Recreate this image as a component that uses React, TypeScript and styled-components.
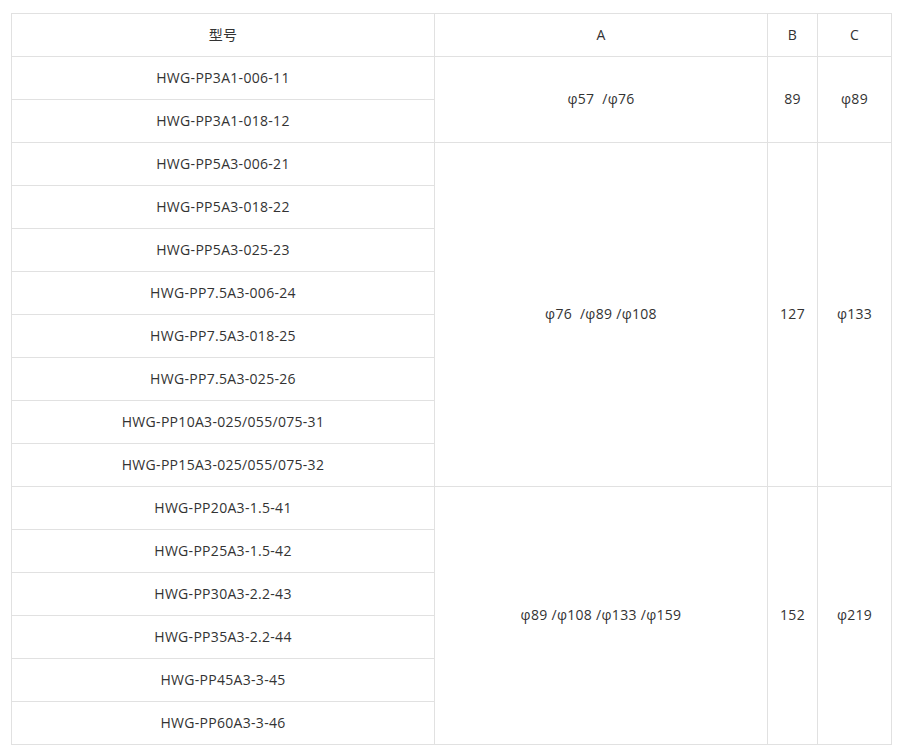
import styled, { createGlobalStyle } from 'styled-components';

const GlobalStyle = createGlobalStyle`
  body {
    margin: 0;
    background: #fff;
    font-family: "Open Sans", "Noto Sans CJK SC", sans-serif;
    color: #333;
  }
`

const Wrapper = styled.div`
  padding: 13px 19px 0 11px;
`

const Table = styled.table`
  width: 880px;
  border-collapse: collapse;
  table-layout: fixed;
  font-size: 14px;
  letter-spacing: 0.3px;
`

const Cell = styled.td`
  border: 1px solid #e1e1e1;
  height: 40px;
  padding: 0 0 2px;
  text-align: center;
  vertical-align: middle;
  white-space: pre;
`

const HeadCell = styled(Cell).attrs({ as: 'th' })`
  font-weight: normal;
`

interface IGroup {
  models: string[];
  a: string;
  b: string;
  c: string;
}

const groups: IGroup[] = [
  {
    models: ['HWG-PP3A1-006-11', 'HWG-PP3A1-018-12'],
    a: 'φ57  /φ76',
    b: '89',
    c: 'φ89',
  },
  {
    models: [
      'HWG-PP5A3-006-21',
      'HWG-PP5A3-018-22',
      'HWG-PP5A3-025-23',
      'HWG-PP7.5A3-006-24',
      'HWG-PP7.5A3-018-25',
      'HWG-PP7.5A3-025-26',
      'HWG-PP10A3-025/055/075-31',
      'HWG-PP15A3-025/055/075-32',
    ],
    a: 'φ76  /φ89 /φ108',
    b: '127',
    c: 'φ133',
  },
  {
    models: [
      'HWG-PP20A3-1.5-41',
      'HWG-PP25A3-1.5-42',
      'HWG-PP30A3-2.2-43',
      'HWG-PP35A3-2.2-44',
      'HWG-PP45A3-3-45',
      'HWG-PP60A3-3-46',
    ],
    a: 'φ89 /φ108 /φ133 /φ159',
    b: '152',
    c: 'φ219',
  },
]

function App() {
  return (
    <Wrapper>
      <GlobalStyle />
      <Table>
        <colgroup>
          <col style={{ width: 423 }} />
          <col style={{ width: 333 }} />
          <col style={{ width: 50 }} />
          <col style={{ width: 74 }} />
        </colgroup>
        <thead>
          <tr>
            <HeadCell>型号</HeadCell>
            <HeadCell>A</HeadCell>
            <HeadCell>B</HeadCell>
            <HeadCell>C</HeadCell>
          </tr>
        </thead>
        <tbody>
          {groups.map((g) =>
            g.models.map((m, i) => (
              <tr key={m}>
                <Cell>{m}</Cell>
                {i === 0 && (
                  <>
                    <Cell rowSpan={g.models.length}>{g.a}</Cell>
                    <Cell rowSpan={g.models.length}>{g.b}</Cell>
                    <Cell rowSpan={g.models.length}>{g.c}</Cell>
                  </>
                )}
              </tr>
            ))
          )}
        </tbody>
      </Table>
    </Wrapper>
  )
}

export default App;
